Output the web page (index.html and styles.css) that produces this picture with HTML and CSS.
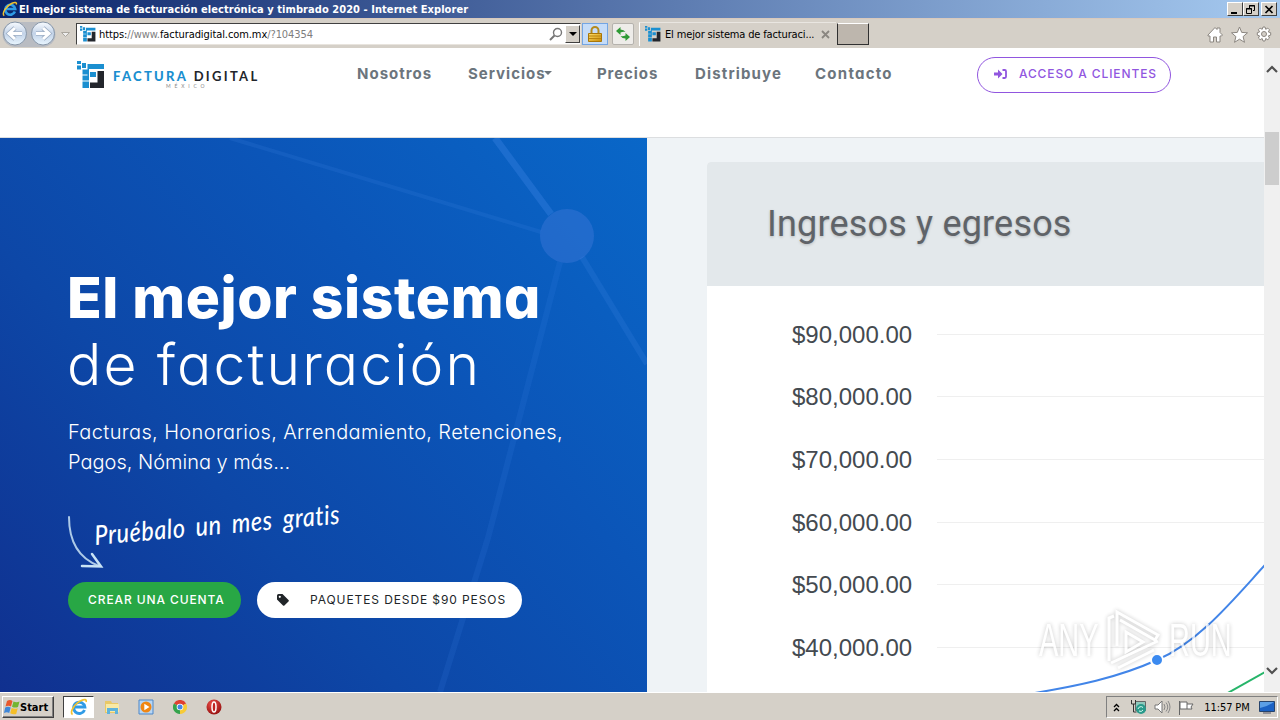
FILE: index.html
```
<!DOCTYPE html>
<html lang="es">
<head>
    <meta charset="UTF-8">
    <meta name="viewport" content="width=device-width, initial-scale=1.0">
    <title>El mejor sistema de facturación electrónica y timbrado 2020</title>
    <link rel="stylesheet" href="styles.css">
</head>
<body>
    <svg class="defs" width="0" height="0">
        <defs>
            <linearGradient id="blueRound" x1="0" y1="0" x2="0" y2="1">
                <stop offset="0" stop-color="#f8fbff"/>
                <stop offset="0.5" stop-color="#c3d3e8"/>
                <stop offset="1" stop-color="#e9f6ff"/>
            </linearGradient>
            <linearGradient id="gold" x1="0" y1="0" x2="1" y2="1">
                <stop offset="0" stop-color="#ffe06a"/>
                <stop offset="1" stop-color="#c98a05"/>
            </linearGradient>
            <radialGradient id="operaRed" cx="0.4" cy="0.3" r="0.8">
                <stop offset="0" stop-color="#f0504a"/>
                <stop offset="1" stop-color="#8c0a0a"/>
            </radialGradient>
        </defs>
        <symbol id="ie" viewBox="0 0 16 16">
            <path d="M12.9 10.6A5 5 0 1 1 13.2 8H4.5" fill="none" stroke="#2f9be6" stroke-width="2.6"/>
            <path d="M2.3 14.6C-1 13 4.500 4.500 10 2.200c3-1.300 5-1 4.300 1.300" fill="none" stroke="#f2c230" stroke-width="1.5"/>
        </symbol>
        <symbol id="fd" viewBox="0 0 28 28">
            <path d="M0 0h4v3H0zM5 2h4v5H5zM0 4.500h4v4H0zM10.500 3H27v5H10.500zM5.500 8.500h5v5h-5zM5.500 14.500H12v5H5.500zM5.500 20.500H12V27H5.500zM10.500 8H12v7h-1.500zM13 11h6v5h-6z" fill="#1b8fd0"/>
            <path d="M20.500 10H27v17H13v-5.500h7.500z" fill="#23262c"/>
        </symbol>
    </svg>

    <div class="titlebar">
        <svg class="title-icon"><use href="#ie"/></svg>
        <span class="title-text">El mejor sistema de facturación electrónica y timbrado 2020 - Internet Explorer</span>
        <div class="win-buttons">
            <span class="win-btn"><svg width="10" height="9"><path d="M1 7h6v2H1z"/></svg></span>
            <span class="win-btn"><svg width="10" height="9"><path d="M3.500 3V.5h5v5H7M3 1h6M.5 3.500h5v5h-5zM0 4h6" fill="none" stroke="#000"/></svg></span>
            <span class="win-btn close"><svg width="10" height="9"><path d="M1.500 1l7 7M8.500 1l-7 7" stroke="#000" stroke-width="1.700"/></svg></span>
        </div>
    </div>

    <div class="toolbar">
        <svg class="nav-arrows" width="70" height="30">
            <path d="M15 3h28a12 12 0 0 1 0 25H15a12 12 0 0 1 0-25z" fill="#b9bcc2"/>
            <circle cx="15" cy="14.500" r="11.500" fill="url(#blueRound)" stroke="#8796a8"/>
            <circle cx="43" cy="14.500" r="11.500" fill="url(#blueRound)" stroke="#8796a8"/>
            <path d="M22 14.500H10M15 9l-6 5.500 6 5.500M36 14.500h12M43 9l6 5.500-6 5.500" fill="none" stroke="#9fb0c6" stroke-width="4.500"/>
            <path d="M22 14.500H10M15 9l-6 5.500 6 5.500M36 14.500h12M43 9l6 5.500-6 5.500" fill="none" stroke="#fff" stroke-width="3"/>
            <path d="M61.500 13.500h8l-4 4z" fill="#eee" stroke="#aaa69e"/>
        </svg>
        <div class="address">
            <svg class="favicon"><use href="#fd"/></svg>
            <span class="url">https:<i>//www.</i>facturadigital.com.mx<i>/?104354</i></span>
            <svg class="search" width="14" height="14"><circle cx="8.500" cy="5.500" r="4" fill="none" stroke="#777" stroke-width="1.400"/><path d="M5.500 8.500L1 13" stroke="#777" stroke-width="2"/></svg>
            <span class="drop"><svg width="8" height="4"><path d="M0 0h8L4 4z"/></svg></span>
        </div>
        <div class="tool lock">
            <svg width="14" height="16"><path d="M3.500 8V4.500a3.500 3.500 0 0 1 7 0V8" fill="none" stroke="#b58a1c" stroke-width="2"/><path d="M.5 7.500h13v8H.5z" fill="url(#gold)" stroke="#a87608"/><path d="M1 10h12M1 12.500h12" stroke="#b9830c"/></svg>
        </div>
        <div class="tool refresh">
            <svg width="14" height="14" fill="#2f9a35"><path d="M4 0L0 4.500h2.500Q2.500 8 5 9.500 4.500 7 5.500 4.500H8zM10 14l4-4.500h-2.500Q11.500 6 9 4.500q.5 2.500-.5 5H6z" transform="rotate(90 7 7) scale(1 -1) translate(0 -14)"/></svg>
        </div>
        <div class="tab">
            <svg class="favicon"><use href="#fd"/></svg>
            <span class="tab-text">El mejor sistema de facturaci...</span>
            <svg width="9" height="9"><path d="M1 1l7 7M8 1L1 8" stroke="#8a8680" stroke-width="1.800"/></svg>
        </div>
        <div class="new-tab"></div>
        <svg class="tool-icons" width="68" height="18" fill="#fff" stroke="#8b8680">
            <path d="M1 10l7-7.500 2 2V3h3v4.500l2.500 2.500-1 1H13v6H9.500v-5h-3v5H3v-6H1z"/>
            <path d="M32.500 2l2.200 5.400 5.800.4-4.400 3.800 1.400 5.700-5-3.100-5 3.100 1.400-5.700-4.400-3.800 5.800-.4z"/>
            <path d="M56 2h2l.7 2.300 2.100-1.200 1.700 1.700-1.200 2.100 2.400.8v2.400l-2.400.8 1.200 2.100-1.700 1.700-2.100-1.200L58 16h-2l-.8-2.500-2.100 1.200-1.700-1.700 1.200-2.100-2.300-.8V7.700l2.300-.8-1.200-2.100 1.700-1.700 2.100 1.200z"/>
            <circle cx="57" cy="9" r="2.500" fill="#d5d0c8"/>
        </svg>
    </div>

    <div class="window">
        <div class="page">
            <header class="header">
                <div class="logo">
                    <svg class="logo-mark"><use href="#fd"/></svg>
                    <div class="logo-text">
                        <div class="logo-name"><b>FACTURA</b> DIGITAL</div>
                        <small>MÉXICO</small>
                    </div>
                </div>
                <nav class="menu">
                    <a class="nosotros">Nosotros</a>
                    <a class="servicios">Servicios<i class="caret"></i></a>
                    <a class="precios">Precios</a>
                    <a class="distribuye">Distribuye</a>
                    <a class="contacto">Contacto</a>
                </nav>
                <a class="btn btn-outline">
                    <svg width="13" height="10" viewBox="0 0 13 10"><path d="M0 3.500h4V.5L8.500 5 4 9.500v-3H0z" fill="#9156df"/><path d="M8.500 1h2.300q1.200 0 1.200 1.200v5.600Q12 9 10.800 9H8.500" fill="none" stroke="#9156df" stroke-width="1.800"/></svg>
                    <span>ACCESO A CLIENTES</span>
                </a>
            </header>

            <main class="main">
                <section class="hero">
                    <svg class="network" width="647" height="554">
                        <g stroke="#4389e8" fill="none">
                            <path d="M495 0L551 76" stroke-width="7" opacity=".32"/>
                            <path d="M230 0L541 94" stroke-width="4" opacity=".16"/>
                            <path d="M582 119L647 226" stroke-width="6" opacity=".2"/>
                            <path d="M560 124L488 400 440 554" stroke-width="6" opacity=".14"/>
                        </g>
                        <circle cx="567" cy="98" r="27" fill="#5b83e4" opacity=".3"/>
                    </svg>
                    <h1><strong>El mejor sistema</strong><span>de facturación</span></h1>
                    <p class="lead"><span class="lead-1">Facturas, Honorarios, Arrendamiento, Retenciones,</span><span class="lead-2">Pagos, Nómina y más...</span></p>
                    <div class="try">
                        <svg width="36" height="54" fill="none" stroke="#c9e3f5" stroke-linecap="round"><path d="M1 1C1 25 10 42 31 50" stroke-width="2" opacity=".85"/><path d="M24 38l9 12.500-19-.5" stroke-width="2.500"/></svg>
                        <em>Pruébalo un mes gratis</em>
                    </div>
                    <div class="actions">
                        <a class="btn btn-success"><span>CREAR UNA CUENTA</span></a>
                        <a class="btn btn-light">
                            <svg width="13" height="13"><path d="M1 2.500Q1 1 2.500 1h4L12.500 7q.7.700 0 1.400L8.400 12.500q-.7.700-1.400 0L1 6.500z" fill="#212529"/><circle cx="3.800" cy="3.800" r="1.100" fill="#fff"/></svg>
                            <span>PAQUETES DESDE $90 PESOS</span>
                        </a>
                    </div>
                </section>

                <section class="preview">
                    <div class="card">
                        <div class="card-header"><h2>Ingresos y egresos</h2></div>
                        <div class="chart">
                            <div class="row"><span>$90,000.00</span><hr></div>
                            <div class="row"><span>$80,000.00</span><hr></div>
                            <div class="row"><span>$70,000.00</span><hr></div>
                            <div class="row"><span>$60,000.00</span><hr></div>
                            <div class="row"><span>$50,000.00</span><hr></div>
                            <div class="row"><span>$40,000.00</span><hr></div>
                            <svg class="lines" width="557" height="406">
                                <path d="M322 408C370 400 410 392 450 374C492 356 526 314 558 279" fill="none" stroke="#4285e8" stroke-width="2"/>
                                <path d="M519 408L558 386" fill="none" stroke="#27b56a" stroke-width="2"/>
                                <circle cx="450" cy="374" r="6" fill="#3b8af0" stroke="#fff" stroke-width="2"/>
                            </svg>
                        </div>
                    </div>
                </section>
            </main>
        </div>

        <div class="scrollbar">
            <svg class="up" width="12" height="8"><path d="M1 7l5-5 5 5" fill="none" stroke="#505050" stroke-width="2.200"/></svg>
            <div class="thumb"></div>
            <svg class="down" width="12" height="8"><path d="M1 1l5 5 5-5" fill="none" stroke="#505050" stroke-width="2.200"/></svg>
        </div>

        <div class="watermark">
            <span>ANY</span>
            <svg width="56" height="64" viewBox="0 0 56 64" fill="none" stroke="#fff" stroke-width="3"><path d="M3 53V10l5-2M11 38V4l41 23-3 5-35-20M20 24v20l17-10zM5 55l47-22M12 60l36-18"/></svg>
            <span>RUN</span>
        </div>
    </div>

    <div class="taskbar">
        <div class="start">
            <svg width="16" height="16"><path d="M3 2q3-2 5.500 0L7 7.500Q4.500 6 1.500 7.500z" fill="#e8582c"/><path d="M9.500 2.500q3 1.500 6 0L14 8q-3 1.300-6-.3z" fill="#73b531"/><path d="M1.200 8.500Q4 7 6.700 8.500L5.200 14Q3 12.500 0 14z" fill="#3f87d8"/><path d="M7.700 9q3 1.500 6 .2L12.200 15q-3 1-6-.7z" fill="#f5bf28"/></svg>
            <span>Start</span>
        </div>
        <div class="task active"><svg width="18" height="18"><use href="#ie"/></svg></div>
        <div class="task"><svg width="16" height="16"><path d="M1 2h6l1 2h6v10H1z" fill="#e9c867"/><path d="M2 5h13v8H2z" fill="#f8e9a5"/><path d="M3 9h11v6h-3v-3H6v3H3z" fill="#5fb3dc"/></svg></div>
        <div class="task"><svg width="16" height="16"><path d="M1 1h14v14H1z" fill="#b7d6f4" stroke="#4d87c9"/><circle cx="8" cy="8" r="5.500" fill="#f08613"/><path d="M6.300 4.800v6.400L11.500 8z" fill="#fff"/></svg></div>
        <div class="task"><svg width="14" height="14" viewBox="0 0 14 14"><path d="M7 7L.9 3.500A7 7 0 0 1 13.100 3.500z" fill="#df4031"/><path d="M7 7l6.100-3.500A7 7 0 0 1 7 14z" fill="#f7cb36"/><path d="M7 7v7A7 7 0 0 1 .9 3.500z" fill="#35a34c"/><circle cx="7" cy="7" r="3.300" fill="#fff"/><circle cx="7" cy="7" r="2.500" fill="#4487e5"/></svg></div>
        <div class="task"><svg width="16" height="16"><circle cx="8" cy="8" r="7.500" fill="url(#operaRed)"/><ellipse cx="8" cy="8" rx="2" ry="5" fill="#c02320" stroke="#fff" stroke-width="1.500"/></svg></div>
        <div class="tray">
            <svg class="chevrons" width="7" height="9"><path d="M1 4l2.500-2.500L6 4M1 8l2.500-2.500L6 8" fill="none" stroke="#000" stroke-width="1.300"/></svg>
            <svg width="17" height="16"><path d="M5.500 2.500h10v9h-10z" fill="#8fc9bd" stroke="#666"/><path d="M1.500 1v4h4V1M3.500 5v8h3" fill="none" stroke="#333"/><circle cx="11" cy="10" r="5" fill="#2a9a8b"/><path d="M8 10a3 3 0 0 1 5-1.500M13 11a3 3 0 0 1-4 1" stroke="#d9fff4" fill="none"/></svg>
            <svg width="17" height="14"><path d="M1 5h3l4-4v12L4 9H1z" fill="#fff" stroke="#777"/><path d="M10 4q2 3 0 6M12 2.500q3.500 4.500 0 9M14 1q4 6 0 12" fill="none" stroke="#888"/></svg>
            <svg width="17" height="15"><path d="M1.500 1v14M2 2h7v7H2zM9 4h6l-2 3 1 2H9" fill="#fff" stroke="#666"/></svg>
            <span class="clock">11:57 PM</span>
            <svg width="16" height="13"><path d="M.5.5h15v10H.5z" fill="#1c62c4" stroke="#27446c"/><path d="M1 7q7-1 14-6H1z" fill="#5c9fe6"/><path d="M4 12h8" stroke="#556"/></svg>
        </div>
    </div>
</body>
</html>
```
FILE: styles.css
```
* {
    margin: 0;
    padding: 0;
    box-sizing: border-box;
}

body {
    width: 1280px;
    height: 720px;
    overflow: hidden;
    display: flex;
    flex-direction: column;
    font-family: Inter, 'Open Sans', sans-serif;
    font-feature-settings: 'cv11';
    white-space: nowrap;
    background: #d5d0c8;
}

svg {
    flex: none;
    display: block;
}

.defs {
    position: absolute;
}

/* browser chrome */
.titlebar {
    height: 18px;
    flex: none;
    display: flex;
    align-items: center;
    padding: 0 3px 0 2px;
    background: linear-gradient(90deg, #0b246a, #a6caf0);
}

.title-icon {
    width: 16px;
    height: 16px;
    margin-right: 1px;
}

.title-text {
    font: bold 11px 'DejaVu Sans Condensed', 'DejaVu Sans', sans-serif;
    letter-spacing: 0.06px;
    color: #fff;
}

.win-buttons {
    display: flex;
    margin-left: auto;
}

.win-btn {
    width: 16px;
    height: 14px;
    display: flex;
    align-items: center;
    justify-content: center;
    background: #d5d0c8;
    border: 1px solid;
    border-color: #fff #404040 #404040 #fff;
}

.win-btn.close {
    margin-left: 2px;
}

.toolbar {
    height: 30px;
    flex: none;
    display: flex;
    align-items: center;
    border-top: 1px solid #d9c9bd;
}

.nav-arrows {
    margin-right: 6px;
}

.address {
    width: 505px;
    height: 22px;
    display: flex;
    align-items: center;
    padding-left: 3px;
    background: #fff;
    border: 1px solid #808080;
    border-color: #404040 #e8e4de #e8e4de #404040;
}

.favicon {
    width: 16px;
    height: 16px;
}

.url {
    margin: 1px 0 0 3px;
    font: 11px 'DejaVu Sans Condensed', 'DejaVu Sans', sans-serif;
    letter-spacing: -0.08px;
    color: #000;
}

.url i {
    font-style: normal;
    color: #7d7d7d;
}

.search {
    margin-left: auto;
    margin-right: 2px;
}

.drop {
    width: 15px;
    height: 18px;
    display: flex;
    align-items: center;
    justify-content: center;
    background: #d5d0c8;
    border: 1px solid;
    border-color: #fff #404040 #404040 #fff;
}

.tool {
    height: 22px;
    display: flex;
    align-items: center;
    justify-content: center;
}

.lock {
    width: 26px;
    margin-left: 1px;
    background: #c5dcf8;
    border: 1px solid #73a5e3;
}

.refresh {
    width: 22px;
    margin-left: 4px;
    background: #eeece9;
    border: 1px solid #b5b2ad;
    border-radius: 2px;
}

.tab {
    width: 197px;
    height: 24px;
    margin-left: 5px;
    display: flex;
    align-items: center;
    padding: 0 6px 0 5px;
    border-left: 1px solid #fff;
    border-top: 1px solid #e9e6e1;
}

.tab-text {
    margin: 0 auto 0 4px;
    font: 11px 'DejaVu Sans Condensed', 'DejaVu Sans', sans-serif;
    letter-spacing: -0.15px;
}

.new-tab {
    width: 32px;
    height: 22px;
    margin-left: 1px;
    background: #bdb6ad;
    border: 1px solid;
    border-color: #fff #303030 #303030 #303030;
}

.tool-icons {
    margin-left: auto;
    margin-right: 5px;
}

.window {
    height: 644px;
    flex: none;
    display: flex;
    position: relative;
}

.page {
    width: 1264px;
    background: #fff;
}

.scrollbar {
    width: 16px;
    background: #f0f0f0;
    display: flex;
    flex-direction: column;
    align-items: center;
    padding: 17px 0 17px;
}

.thumb {
    width: 14px;
    height: 53px;
    margin-top: 59px;
    background: #cdcdcd;
}

.down {
    margin-top: auto;
}

/* site header */
.header {
    height: 90px;
    display: flex;
    align-items: flex-start;
    border-bottom: 1px solid #dcdee0;
}

.logo {
    width: 280px;
    display: flex;
    margin: 13px 0 0 77px;
}

.logo-mark {
    width: 28px;
    height: 28px;
}

.logo-text {
    margin: 7px 0 0 8px;
}

.logo-name {
    font: 700 13px/16px Lato, sans-serif;
    letter-spacing: 2.3px;
    color: #22252b;
}

.logo-name b {
    color: #1b8fd0;
}

.logo small {
    display: block;
    padding-left: 53px;
    font: 5px/5px Lato, sans-serif;
    letter-spacing: 3.8px;
    color: #888;
}

.menu {
    width: 620px;
    display: flex;
    padding-top: 16px;
    font-size: 15px;
    line-height: 20px;
    font-weight: 700;
    letter-spacing: 1px;
    color: #6c757d;
}

.nosotros { width: 111px; }
.servicios { width: 129px; }
.precios { width: 98px; letter-spacing: 0.9px; }
.distribuye { width: 120px; letter-spacing: 1.15px; }
.contacto { letter-spacing: 1.25px; }

.caret {
    display: inline-block;
    margin-left: -2px;
    vertical-align: 4px;
    border: 4px solid transparent;
    border-top-color: #6c757d;
    border-bottom: 0;
}

.btn {
    height: 36px;
    display: flex;
    align-items: center;
    justify-content: space-between;
    border-radius: 18px;
    font-size: 12px;
    font-weight: 500;
    letter-spacing: 0.9px;
}

.btn-outline {
    width: 194px;
    margin-top: 9px;
    padding: 0 13px 3px 16px;
    border: 1px solid #9156df;
    color: #9156df;
}

/* hero */
.main {
    height: 554px;
    display: flex;
}

.hero {
    width: 647px;
    position: relative;
    padding: 126px 0 0 68px;
    color: #fff;
    background: linear-gradient(48deg, #10308f 0%, #0d47a7 35%, #0b55b8 65%, #0967c8 100%);
}

.network {
    position: absolute;
    left: 0;
    top: 0;
}

.hero h1 {
    position: relative;
    font-size: 57px;
    line-height: 67px;
}

.hero h1 strong,
.hero h1 span {
    display: block;
}

.hero h1 strong {
    margin-left: -1px;
    font-weight: 800;
    letter-spacing: 0.6px;
}

.hero h1 span {
    margin-left: -1px;
    font-weight: 300;
    letter-spacing: 2.1px;
}

.lead {
    position: relative;
    margin-top: 19px;
    font-size: 20px;
    line-height: 30px;
    font-weight: 300;
}

.lead span {
    display: block;
}

.lead-1 {
    letter-spacing: 0.37px;
}

.try {
    height: 54px;
    margin-top: 39px;
    display: flex;
    position: relative;
}

.try em {
    margin: 1px 0 0 -9px;
    font: italic 500 27px/36px Lato, sans-serif;
    letter-spacing: 0.6px;
    word-spacing: 5px;
    transform: rotate(-5deg) scaleX(0.87);
    transform-origin: 0 50%;
}

.actions {
    position: relative;
    display: flex;
    gap: 16px;
    margin-top: 12px;
}

.btn-success {
    width: 173px;
    padding: 0 15px 1px 20px;
    background: #28a745;
}

.btn-light {
    width: 265px;
    padding: 0 16px 1px 19px;
    background: #fff;
    color: #212529;
}

.btn-light span {
    font-weight: 400;
}

/* chart preview */
.preview {
    width: 617px;
    padding: 24px 0 0 60px;
    background: #eff3f6;
}

.card {
    height: 530px;
    background: #fff;
    border-radius: 4px 0 0 0;
    overflow: hidden;
}

.card-header {
    height: 124px;
    padding-left: 60px;
    background: #e3e8eb;
}

.card-header h2 {
    font: 400 36px/124px Roboto, sans-serif;
    letter-spacing: 0.18px;
    color: #5f6368;
    text-shadow: 0 1px 3px rgba(0, 0, 0, 0.2);
}

.chart {
    height: 406px;
    padding-top: 17px;
    position: relative;
    overflow: hidden;
}

.row {
    height: 62.6px;
    display: flex;
    align-items: center;
    padding-left: 85px;
    font: 24px 'Liberation Sans', Arial, sans-serif;
    color: #444a50;
}

.row span {
    padding-top: 1px;
}

.row hr {
    flex: 1;
    margin-left: 25px;
    border: 0;
    height: 1px;
    background: #efefef;
}

.lines {
    position: absolute;
    left: 0;
    top: 0;
}

.watermark {
    position: absolute;
    left: 1039px;
    top: 560px;
    display: flex;
    align-items: center;
    gap: 7px;
    width: 194px;
    filter: drop-shadow(0 0 2px rgba(0, 0, 0, 0.3));
    opacity: 0.75;
}

.watermark span {
    width: 60px;
    font: 46px/60px 'Liberation Sans', sans-serif;
    color: #fff;
    transform: scaleX(0.63);
    transform-origin: 0 50%;
}

/* taskbar */
.taskbar {
    height: 28px;
    flex: none;
    display: flex;
    align-items: center;
    padding: 1px 2px 0;
    border-top: 1px solid #fff;
    background: #d5d0c8;
}

.start {
    width: 52px;
    height: 22px;
    margin-right: 9px;
    display: flex;
    align-items: center;
    padding-left: 1px;
    border: 1px solid;
    border-color: #fff #404040 #404040 #fff;
    box-shadow: inset -1px -1px #808080;
    font: bold 11px 'DejaVu Sans Condensed', 'DejaVu Sans', sans-serif;
}

.task {
    width: 34px;
    height: 22px;
    display: flex;
    align-items: center;
    justify-content: center;
}

.task.active {
    width: 31px;
    margin-right: 1px;
    background: #fff;
    border: 1px solid;
    border-color: #404040 #fff #fff #404040;
}

.tray {
    width: 172px;
    height: 22px;
    margin-left: auto;
    display: flex;
    align-items: center;
    gap: 7px;
    padding: 0 2px 0 6px;
    border: 1px solid;
    border-color: #808080 #fff #fff #808080;
}

.chevrons {
    margin-right: 3px;
}

.clock {
    margin: 0 auto;
    font: 11px 'DejaVu Sans Condensed', 'DejaVu Sans', sans-serif;
    letter-spacing: -0.1px;
}
```
